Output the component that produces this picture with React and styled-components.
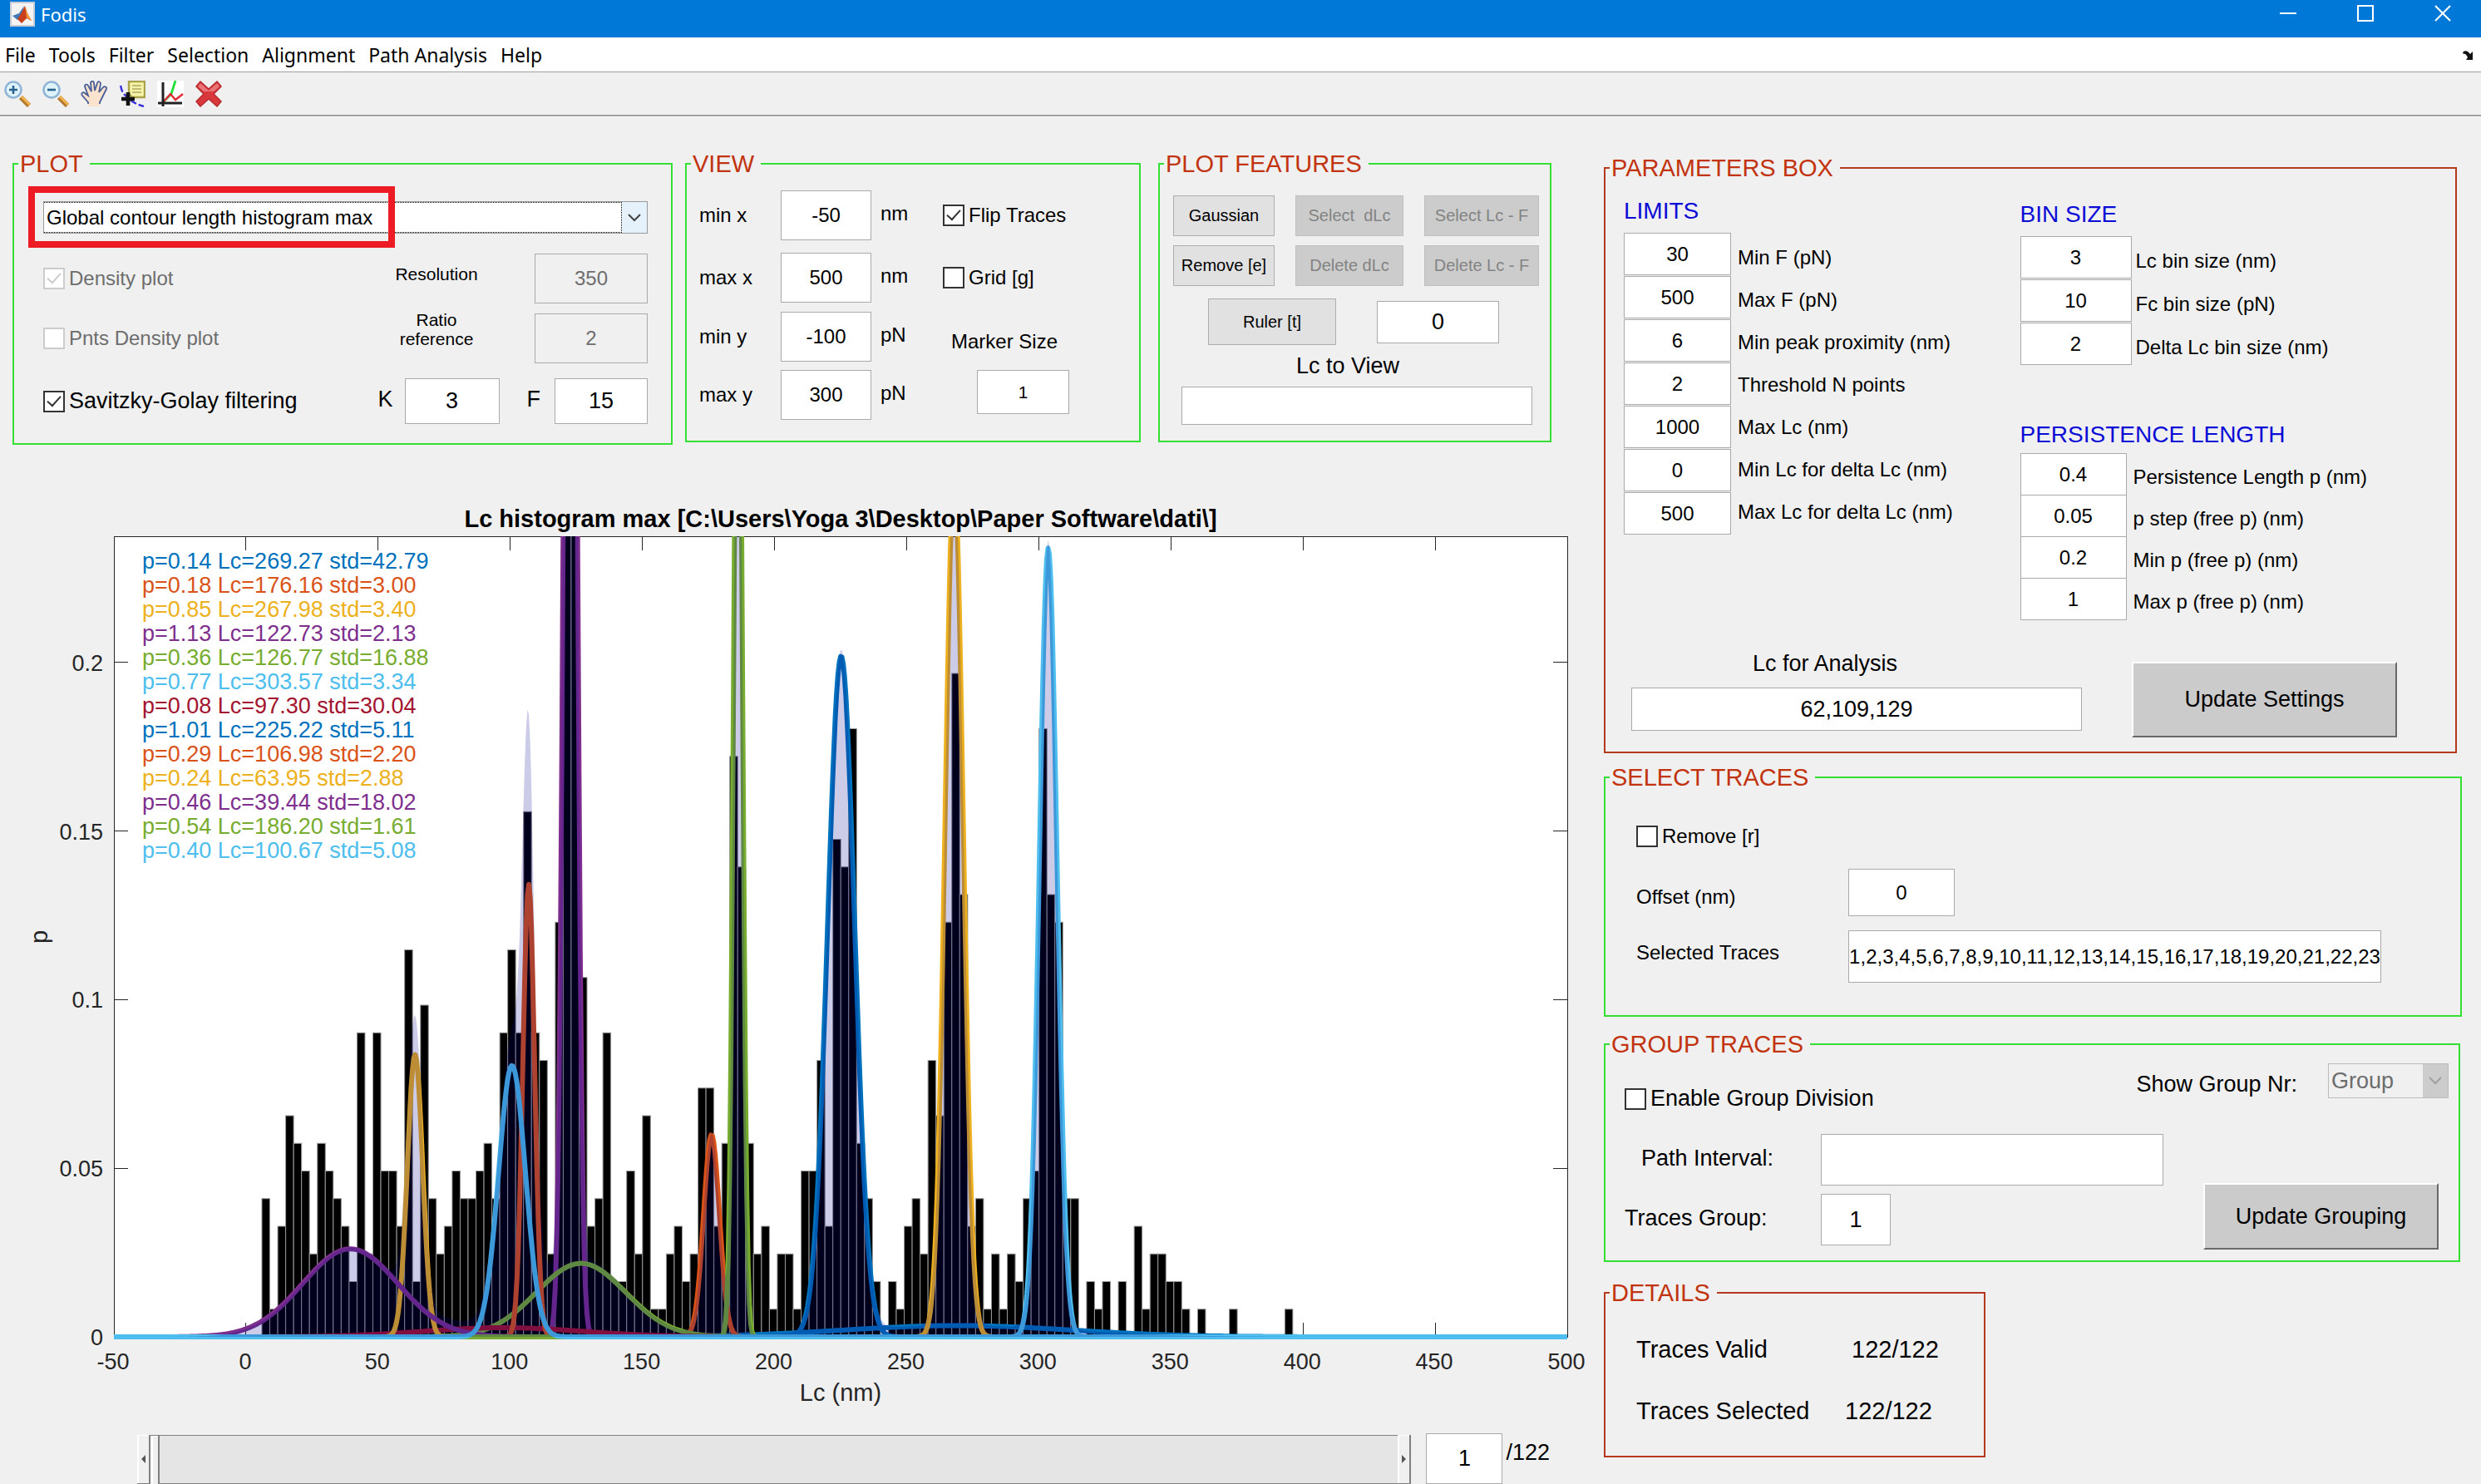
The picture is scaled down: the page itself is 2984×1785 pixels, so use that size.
import React from "react";
import styled, { createGlobalStyle, css } from "styled-components";

const GREEN = "#33df33";
const RUST = "#b5391d";
const SANS = '"Liberation Sans", Arial, sans-serif';
const SYSTEM = '"Noto Sans", "Open Sans", sans-serif';

const GlobalStyle = createGlobalStyle`
  *, *::before, *::after { box-sizing: border-box; }
  body { margin: 0; background: #f0f0f0; color: #000; font-family: ${SANS}; }
  button, input, select { font-family: inherit; margin: 0; border-radius: 0; }
`;

/* ---------- window chrome ---------- */

const TitleBar = styled.header`
  display: flex;
  align-items: flex-start;
  height: 45px;
  padding-left: 12px;
  background: #0078d7;
  color: #fff;
`;

const AppIcon = styled.svg`
  width: 30px;
  height: 30px;
  margin: 2px 7px 0 0;
`;

const AppName = styled.h1`
  flex: 1;
  margin: 0;
  font: 400 22px/34px ${SYSTEM};
`;

const WindowButton = styled.button`
  width: 93px;
  height: 32px;
  padding: 0;
  border: 0;
  background: transparent;
  color: #fff;
  svg { display: block; margin: 0 auto; }
`;

const MenuBar = styled.nav`
  display: flex;
  align-items: center;
  height: 42px;
  padding: 0 8px 0 6px;
  gap: 16px;
  background: #fff;
  border-bottom: 1px solid #a0a0a0;
`;

const MenuItem = styled.button`
  padding: 0;
  border: 0;
  background: transparent;
  font: 400 23px/40px ${SYSTEM};
  color: #000;
`;

const DockArrow = styled.svg`
  width: 14px;
  height: 12px;
  margin-left: auto;
`;

const ToolBar = styled.div`
  display: flex;
  align-items: center;
  gap: 14px;
  height: 53px;
  padding: 0 5px;
  border-bottom: 2px solid #a0a0a0;
  box-shadow: 0 1px 0 #fff;
`;

const ToolButton = styled.button`
  width: 32px;
  height: 32px;
  padding: 0;
  border: 0;
  background: transparent;
  svg { display: block; width: 32px; height: 32px; }
`;

/* ---------- layout ---------- */

const Workspace = styled.main`
  display: grid;
  grid-template-columns: 1910fr 1074fr;
  padding-top: 41px;
`;

const LeftSide = styled.div`
  min-width: 0;
`;

const TopPanels = styled.div`
  display: grid;
  grid-template-columns: 794fr 554fr 473fr;
  column-gap: 15px;
  align-items: start;
  padding: 0 44px 0 15px;
`;

const RightSide = styled.div`
  padding: 5px 23px 0 19px;
`;

/* ---------- panels ---------- */

const Panel = styled.fieldset`
  min-width: 0;
  margin: 0 ${(p) => p.$inset || 0}px ${(p) => p.$after || 0}px 0;
  padding: 0;
  border: 2px solid ${(p) => (p.$rust ? RUST : GREEN)};
  ${(p) => p.$narrow && css`width: 44.5%;`}
`;

const PanelTitle = styled.legend`
  margin-left: 5px;
  padding: 0 8px 0 2px;
  font-size: 29px;
  line-height: 32px;
  color: #c2330f;
`;

const PlotBody = styled.div`
  padding: 29px 28px 23px 35px;
`;

const ViewBody = styled.div`
  display: grid;
  grid-template-columns: 98px 120px 75px 1fr;
  grid-template-rows: 75px 71px 70px 60px;
  align-items: start;
  padding: 16px 0 25px 15px;
`;

const FeaturesBody = styled.div`
  padding: 22px 13px 19px 16px;
`;

const ParamsBody = styled.div`
  padding: 20px 0 17px 22px;
`;

/* ---------- controls ---------- */

const Field = styled.input`
  width: ${(p) => (p.$w ? `${p.$w}px` : "100%")};
  height: ${(p) => p.$h}px;
  padding: 0;
  border: 1px solid #aaa;
  background: #fff;
  color: #000;
  font-size: ${(p) => p.$size || 24}px;
  text-align: center;
  &:disabled { background: #f0f0f0; color: #6d6d6d; }
`;

const Caption = styled.label`
  display: block;
  font-size: ${(p) => p.$size || 24}px;
  line-height: ${(p) => p.$line || 60}px;
  padding-left: ${(p) => p.$indent || 0}px;
  padding-right: ${(p) => p.$trail || 0}px;
  text-align: ${(p) => (p.$center ? "center" : "left")};
  white-space: nowrap;
`;

const CheckLabel = styled.label`
  display: flex;
  flex: ${(p) => (p.$grow ? 1 : "none")};
  align-items: center;
  gap: 5px;
  height: ${(p) => p.$h || 60}px;
  font-size: ${(p) => p.$size || 24}px;
  white-space: nowrap;
  color: ${(p) => (p.$off ? "#6d6d6d" : "#000")};
`;

const CheckBox = styled.input`
  appearance: none;
  flex: none;
  width: 26px;
  height: 26px;
  border: 2px solid #333;
  background: #fff;
  &:checked::before {
    content: "";
    display: block;
    width: 16px;
    height: 9px;
    margin: 4px 0 0 3px;
    border: solid #333;
    border-width: 0 0 2px 2px;
    transform: rotate(-48deg);
  }
  &:disabled { border-color: #ccc; }
  &:disabled::before { border-color: #ccc; }
`;

function Check({ label, size, h, grow, ...rest }) {
  return (
    <CheckLabel $size={size} $h={h} $grow={grow} $off={rest.disabled}>
      <CheckBox type="checkbox" {...rest} />
      {label}
    </CheckLabel>
  );
}

const SelectBox = styled.div`
  position: relative;
  width: ${(p) => (p.$w ? `${p.$w}px` : "100%")};
  height: ${(p) => p.$h}px;
`;

const Select = styled.select`
  appearance: none;
  width: 100%;
  height: 100%;
  padding: 0 32px 0 3px;
  border: 1px solid #999;
  background: #fff;
  font-size: ${(p) => p.$size}px;
  color: #000;
  opacity: 1;
  &:disabled { background: #f0f0f0; color: #6d6d6d; border-color: #bbb; }
`;

const SelectArrow = styled.span`
  position: absolute;
  inset: 1px 1px 1px auto;
  display: grid;
  place-items: center;
  width: 30px;
  background: ${(p) => (p.$off ? "#ccc" : "#e5f1fb")};
  color: ${(p) => (p.$off ? "#a0a0a0" : "#444")};
  pointer-events: none;
`;

const FocusRing = styled.span`
  position: absolute;
  inset: 1px 31px 1px 1px;
  border: 1px dotted #000;
  border-left: 0;
  pointer-events: none;
`;

const Highlight = styled.span`
  position: absolute;
  top: -18px;
  left: -18px;
  width: 441px;
  height: 74px;
  border: 8px solid #ed1c24;
  pointer-events: none;
`;

const SmallButton = styled.button`
  width: ${(p) => (p.$w ? `${p.$w}px` : "100%")};
  height: ${(p) => p.$h || 49}px;
  padding: 0;
  border: 1px solid #adadad;
  background: #e1e1e1;
  color: #000;
  font-size: 20px;
  white-space: pre;
  &:disabled { border-color: #bfbfbf; background: #ccc; color: #838383; }
`;

const BigButton = styled.button`
  flex: none;
  width: ${(p) => p.$w}px;
  height: ${(p) => p.$h}px;
  margin-top: ${(p) => p.$top}px;
  padding: 0;
  border: 2px solid;
  border-color: #fff #696969 #696969 #fff;
  background: #cbcbcb;
  color: #000;
  font-size: 27px;
`;

/* ---------- plot panel ---------- */

const DensityRows = styled.div`
  display: flex;
  margin-top: 24px;
`;

const Stack = styled.div`
  display: flex;
  flex-direction: column;
  flex: ${(p) => (p.$grow ? 1 : "none")};
  gap: ${(p) => p.$gap || 0}px;
  width: ${(p) => (p.$w ? `${p.$w}px` : "auto")};
`;

const FilterRow = styled.div`
  display: flex;
  margin-top: 18px;
`;

const DensityLabels = styled(Stack)`
  margin-right: 63px;
`;

/* ---------- features panel ---------- */

const ButtonGrid = styled.div`
  display: grid;
  grid-template-columns: 122px 130px 138px;
  gap: 11px 0;
  justify-content: space-between;
`;

const RulerRow = styled.div`
  display: flex;
  align-items: center;
  gap: 49px;
  margin-top: 15px;
  padding-left: 42px;
`;

const ViewField = styled.div`
  padding: 0 8px 0 10px;
`;

const MarkerField = styled.div`
  padding: 0 0 0 41px;
`;

/* ---------- parameters panel ---------- */

const ParamColumns = styled.div`
  display: grid;
  grid-template-columns: 477fr 524fr;
`;

const ParamTitle = styled.h2`
  margin: 0 0 ${(p) => p.$after}px;
  font-weight: 400;
  font-size: 28px;
  line-height: 32px;
  color: #0b0bd6;
`;

const ParamGrid = styled.div`
  display: flex;
  gap: ${(p) => p.$gap}px;
`;

const ParamInputs = styled.div`
  display: grid;
  grid-auto-rows: ${(p) => p.$step}px;
  width: ${(p) => p.$w}px;
`;

const ParamLabels = styled.div`
  padding-top: 4px;
`;

const RightParams = styled.div`
  display: flex;
  flex-direction: column;
  justify-content: space-between;
  height: 511px;
  padding-top: 4px;
`;

const AnalysisRow = styled.div`
  display: flex;
  gap: 60px;
  margin-top: 30px;
  padding-left: 9px;
`;

function ParamGroup({ title, items, w, step, labelStep, after, gap = 8 }) {
  return (
    <section>
      <ParamTitle $after={after}>{title}</ParamTitle>
      <ParamGrid $gap={gap}>
        <ParamInputs $w={w} $step={step}>
          {items.map(([id, , value]) => (
            <Field key={id} id={id} $h={51} defaultValue={value} />
          ))}
        </ParamInputs>
        <ParamLabels>
          {items.map(([id, label]) => (
            <Caption key={id} htmlFor={id} $line={labelStep}>
              {label}
            </Caption>
          ))}
        </ParamLabels>
      </ParamGrid>
    </section>
  );
}

const LIMITS = [
  ["min-f", "Min F (pN)", "30"],
  ["max-f", "Max F (pN)", "500"],
  ["min-peak", "Min peak proximity (nm)", "6"],
  ["threshold", "Threshold N points", "2"],
  ["max-lc", "Max Lc (nm)", "1000"],
  ["min-dlc", "Min Lc for delta Lc (nm)", "0"],
  ["max-dlc", "Max Lc for delta Lc (nm)", "500"],
];
const BINS = [
  ["lc-bin", "Lc bin size (nm)", "3"],
  ["fc-bin", "Fc bin size (pN)", "10"],
  ["dlc-bin", "Delta Lc bin size (nm)", "2"],
];
const PERSISTENCE = [
  ["p-length", "Persistence Length p (nm)", "0.4"],
  ["p-step", "p step (free p) (nm)", "0.05"],
  ["p-min", "Min p (free p) (nm)", "0.2"],
  ["p-max", "Max p (free p) (nm)", "1"],
];

/* ---------- traces panels ---------- */

const SelectBody = styled.div`
  padding: 25px 0 39px 37px;
`;

const TraceGrid = styled.div`
  display: grid;
  grid-template-columns: 255px 1fr;
  grid-template-rows: 74px 63px;
  align-items: start;
  margin-top: 9px;
`;

const GroupBody = styled.div`
  padding: 7px 12px 14px 23px;
`;

const GroupTop = styled.div`
  display: flex;
  align-items: flex-start;
`;

const GroupGrid = styled.div`
  display: grid;
  grid-template-columns: 236px 412px;
  grid-auto-rows: 72px;
  align-items: start;
`;

const GroupBottom = styled.div`
  display: flex;
  justify-content: space-between;
  height: 138px;
  padding-right: 12px;
`;

const DetailList = styled.dl`
  margin: 0;
  padding: 15px 0 17px 37px;
  font-size: 29px;
  line-height: 74px;
`;

const DetailRow = styled.div`
  display: flex;
  height: 74px;
  dt { width: ${(p) => p.$w}px; }
  dd { margin: 0; }
`;

/* ---------- chart ---------- */

const Chart = styled.svg`
  display: block;
  width: 100%;
  margin-top: 55px;
  font-family: ${SANS};
  font-size: 27px;
  fill: #262626;
`;

const X0 = 137;
const Y0 = 1608;
const TOP = 645;
const RIGHT = 1885;
const px = (lc) => X0 + ((lc + 50) * (RIGHT - X0)) / 550;
const py = (p) => Y0 - p * 4056;

/* trace counts per 3 nm bin, the first bin starts at 6 nm */
const COUNTS = [
  5, 1, 4, 8, 7, 6, 3, 7, 6, 5, 4, 2, 11, 3, 11, 6, 6, 4, 14, 2, 12, 5, 3, 4, 6,
  5, 5, 6, 7, 5, 11, 14, 11, 19, 11, 10, 3, 15, 60, 60, 13, 4, 5, 11, 2, 2, 6,
  3, 8, 1, 1, 3, 4, 2, 3, 9, 9, 4, 7, 21, 17, 7, 3, 4, 1, 3, 3, 1, 6, 6, 10, 4,
  18, 17, 22, 7, 5, 2, 0, 2, 1, 4, 5, 3, 10, 8, 15, 24, 16, 4, 5, 1, 3, 1, 3, 2,
  5, 6, 22, 16, 15, 5, 5, 0, 2, 1, 2, 0, 2, 0, 4, 1, 3, 3, 2, 2, 1, 0, 1, 0, 0,
  0, 1, 0, 0, 0, 0, 0, 0, 1,
];

/* p, Lc and std as they are printed, the line colour, and p before rounding */
const FITS = [
  ["0.14", "269.27", "42.79", "#0072bd", 0.14],
  ["0.18", "176.16", "3.00", "#d95319", 0.176],
  ["0.85", "267.98", "3.40", "#edb120", 0.85],
  ["1.13", "122.73", "2.13", "#7e2f8e", 1.13],
  ["0.36", "126.77", "16.88", "#77ac30", 0.36],
  ["0.77", "303.57", "3.34", "#4dbeee", 0.765],
  ["0.08", "97.30", "30.04", "#a2142f", 0.08],
  ["1.01", "225.22", "5.11", "#0072bd", 1.01],
  ["0.29", "106.98", "2.20", "#d95319", 0.289],
  ["0.24", "63.95", "2.88", "#edb120", 0.236],
  ["0.46", "39.44", "18.02", "#7e2f8e", 0.46],
  ["0.54", "186.20", "1.61", "#77ac30", 0.54],
  ["0.40", "100.67", "5.08", "#4dbeee", 0.4],
];

const gauss = ([, m, s, , p], x) =>
  ((1.0215 * p) / s) * Math.exp(-((x - m) ** 2) / (2 * s * s));

const XS = Array.from({ length: 1101 }, (_, i) => -50 + i / 2);
const line = (f) =>
  XS.map((x) => `${px(x).toFixed(1)},${py(f(x)).toFixed(1)}`).join(" ");

const CURVES = FITS.map((fit) => line((x) => gauss(fit, x)));
const SUM = line((x) => FITS.reduce((t, fit) => t + gauss(fit, x), 0));

const XTICKS = [-50, 0, 50, 100, 150, 200, 250, 300, 350, 400, 450, 500];
const YTICKS = [0, 0.05, 0.1, 0.15, 0.2];

function Histogram() {
  return (
    <Chart viewBox="0 590 1910 1120" role="img" aria-label="Lc histogram max">
      <defs>
        <clipPath id="plot-area">
          <rect x={X0} y={TOP} width={RIGHT - X0} height={Y0 - TOP + 4} />
        </clipPath>
      </defs>
      <g stroke="#262626" strokeWidth="1" shapeRendering="crispEdges">
        <rect x={X0} y={TOP} width={RIGHT - X0} height={Y0 - TOP} fill="#fff" />
        {XTICKS.slice(1, -1).map((t) => (
          <path key={t} d={`M${px(t)} ${TOP}v17M${px(t)} ${Y0}v-17`} />
        ))}
        {YTICKS.slice(1).map((t) => (
          <path key={t} d={`M${X0} ${py(t)}h17M${RIGHT} ${py(t)}h-17`} />
        ))}
      </g>
      <g clipPath="url(#plot-area)">
        <g fill="#000" stroke="#999" strokeWidth="1">
          {COUNTS.map((n, i) =>
            n ? (
              <rect
                key={i}
                x={px(6 + i * 3.001)}
                y={Y0 - n * 33.25}
                width={9.54}
                height={n * 33.25}
              />
            ) : null
          )}
        </g>
        <g fill="none" strokeWidth="6" strokeLinejoin="round">
          {CURVES.map((points, i) => (
            <polyline key={i} points={points} stroke={FITS[i][3]} />
          ))}
        </g>
        <polygon points={`${X0},${Y0} ${SUM} ${RIGHT},${Y0}`} fill="#00008c" fillOpacity="0.2" />
      </g>
      {FITS.map(([p, m, s, color], i) => (
        <text key={i} x="171" y={684 + i * 29} fill={color}>
          {`p=${p} Lc=${m} std=${s}`}
        </text>
      ))}
      <g textAnchor="middle">
        {XTICKS.map((t) => (
          <text key={t} x={px(t) - 1} y="1647">{t}</text>
        ))}
        <text x="1011" y="1685" fontSize="29">Lc (nm)</text>
        <text x="1011" y="634" fontSize="29" fontWeight="700" fill="#000">
          {"Lc histogram max [C:\\Users\\Yoga 3\\Desktop\\Paper Software\\dati\\]"}
        </text>
        <text fontSize="29" transform="translate(57 1127) rotate(-90)">p</text>
      </g>
      <g textAnchor="end">
        {YTICKS.map((t) => (
          <text key={t} x="124" y={py(t) + 10}>{t}</text>
        ))}
      </g>
    </Chart>
  );
}

/* ---------- trace slider ---------- */

const SliderRow = styled.div`
  display: flex;
  align-items: flex-start;
  margin-top: 14px;
  padding: 0 46px 0 165px;
`;

const SliderBar = styled.div`
  display: flex;
  flex: 1;
  height: 59px;
  margin: 2px 18px 0 0;
`;

const StepButton = styled.button`
  display: grid;
  place-items: center;
  width: 16px;
  padding: 0;
  border: 1px solid #808080;
  border-width: 0 2px 1px 0;
  background: #f0f0f0;
  box-shadow: inset 2px 1px 0 #fff;
`;

const Range = styled.input`
  appearance: none;
  flex: 1;
  min-width: 0;
  height: 59px;
  background: #e5e5e5;
  border: solid #808080;
  border-width: 1px 0;
  &::-webkit-slider-thumb {
    appearance: none;
    width: 11px;
    height: 58px;
    background: #f0f0f0;
    border-right: 2px solid #808080;
    box-shadow: inset 3px 1px 0 #fff;
  }
`;

const Total = styled.span`
  margin-left: 4px;
  font-size: 27px;
  line-height: 46px;
`;

/* ---------- icons ---------- */

function Lens({ minus }) {
  return (
    <svg viewBox="0 0 32 32">
      <path d="M20 20l10 10" stroke="#b5792c" strokeWidth="6" />
      <path d="M21 19l10 10" stroke="#f0b455" strokeWidth="3" />
      <circle cx="11" cy="11" r="9.500" fill="#dff3fb" stroke="#8fb4d6" strokeWidth="2.500" />
      <path d={minus ? "M6 11h10" : "M6 11h10M11 6v10"} stroke="#2b6390" strokeWidth="2.600" />
    </svg>
  );
}

const TOOLS = [
  ["Zoom in", <Lens />],
  ["Zoom out", <Lens minus />],
  [
    "Pan",
    <svg viewBox="0 0 32 32">
      <path
        d="M9 31v-5L2 18c-2-3 1-5 3-3l4 3L5 7c0-3 3-3 4-1l4 7L12 3c0-3 4-3 4 0l1 9 3-9c1-3 4-2 4 1l-2 10 5-6c2-2 5 0 4 2l-5 10-3 6v5z"
        fill="#fbe3cd"
      />
      <path
        d="M9 28v-2L2 18c-2-3 1-5 3-3l4 3L5 7c0-3 3-3 4-1l4 7L12 3c0-3 4-3 4 0l1 9 3-9c1-3 4-2 4 1l-2 10 5-6c2-2 5 0 4 2l-5 10-3 6v2"
        fill="none" stroke="#4a5f96" strokeWidth="1.800"
      />
    </svg>,
  ],
  [
    "Data cursor",
    <svg viewBox="0 0 32 32">
      <path d="M2 6c1 5 2 8 6 12s10 10 22 13" fill="none" stroke="#3a2fe0" strokeWidth="2.400" strokeDasharray="8 3" />
      <path d="M12 1h19v19H16l-4-4z" fill="#f7f3a6" stroke="#a9a24a" strokeWidth="2.400" />
      <path d="M16 6h11M16 10h11M16 14h11" stroke="#aca763" strokeWidth="1.600" />
      <path d="M11 14v16M3 22h16" stroke="#111" strokeWidth="4.600" />
    </svg>,
  ],
  [
    "Brush",
    <svg viewBox="0 0 32 32">
      <rect width="32" height="32" fill="#fff" />
      <path d="M6 27L17 16l5-16" fill="none" stroke="#22e03a" strokeWidth="2.800" />
      <path d="M8 25l8-9 6 7 9-7" fill="none" stroke="#e02a3a" strokeWidth="2.400" />
      <path d="M7 2v29M1 27h29" stroke="#222" strokeWidth="3" />
    </svg>,
  ],
  [
    "Delete",
    <svg viewBox="0 0 32 32">
      <path d="M6 1l10 9L26 1l5 6-9 9 9 9-5 6-10-9-10 9-5-6 9-9-9-9z" fill="#d8383c" stroke="#b92a2f" strokeWidth="1.500" strokeLinejoin="round" />
      <path d="M6 3l10 9L26 3l3 4-7 6H10L3 7z" fill="#e87577" />
    </svg>,
  ],
];

const Chevron = () => (
  <svg width="16" height="10" viewBox="0 0 16 10" fill="none" stroke="currentColor" strokeWidth="2">
    <path d="M1 1l7 7 7-7" />
  </svg>
);

const AXES = [
  ["min-x", "min x", "-50", "nm"],
  ["max-x", "max x", "500", "nm"],
  ["min-y", "min y", "-100", "pN"],
  ["max-y", "max y", "300", "pN"],
];

const VIEW_EXTRAS = [
  <Check label="Flip Traces" defaultChecked />,
  <Check label="Grid [g]" />,
  <Caption htmlFor="marker" $line={72} $indent={10}>Marker Size</Caption>,
  <MarkerField>
    <Field id="marker" $w={111} $h={53} $size={21} defaultValue="1" />
  </MarkerField>,
];

export default function App() {
  return (
    <>
      <GlobalStyle />
      <TitleBar>
        <AppIcon viewBox="0 0 30 30">
          <rect x="1" y="1" width="28" height="28" fill="#f4f4f4" stroke="#c9ced6" strokeWidth="2" />
          <path d="M3 17l8-3 6-9-4 15-4 2z" fill="#3f79b8" />
          <path d="M9 21l5-8 4-8 3 9 5 9-6-3-6 6z" fill="#c8401c" />
          <path d="M18 5l3 9 5 9-6-4z" fill="#f29a3c" />
        </AppIcon>
        <AppName>Fodis</AppName>
        <WindowButton aria-label="Minimize">
          <svg width="20" height="20"><path d="M0 10h20" stroke="#fff" strokeWidth="2" /></svg>
        </WindowButton>
        <WindowButton aria-label="Maximize">
          <svg width="20" height="20"><rect x="1" y="1" width="18" height="18" fill="none" stroke="#fff" strokeWidth="2" /></svg>
        </WindowButton>
        <WindowButton aria-label="Close">
          <svg width="20" height="20"><path d="M1 1l18 18M19 1L1 19" stroke="#fff" strokeWidth="2" /></svg>
        </WindowButton>
      </TitleBar>
      <MenuBar>
        {["File", "Tools", "Filter", "Selection", "Alignment", "Path Analysis", "Help"].map((m) => (
          <MenuItem key={m}>{m}</MenuItem>
        ))}
        <DockArrow viewBox="0 0 14 12">
          <path d="M0 3c3-3 6-2 9 2l3-3v10H4l2-3C4 5 3 4 1 5z" fill="#111" />
        </DockArrow>
      </MenuBar>
      <ToolBar>
        {TOOLS.map(([name, icon]) => (
          <ToolButton key={name} aria-label={name}>{icon}</ToolButton>
        ))}
      </ToolBar>

      <Workspace>
        <LeftSide>
          <TopPanels>
            <Panel>
              <PanelTitle>PLOT</PanelTitle>
              <PlotBody>
                <SelectBox $h={39}>
                  <Select $size={24} aria-label="Plot type">
                    <option>Global contour length histogram max</option>
                  </Select>
                  <FocusRing />
                  <SelectArrow><Chevron /></SelectArrow>
                  <Highlight />
                </SelectBox>
                <DensityRows>
                  <Stack $grow $gap={12}>
                    <Check label="Density plot" defaultChecked disabled />
                    <Check label="Pnts Density plot" disabled />
                  </Stack>
                  <DensityLabels $w={110} $gap={18}>
                    <Caption htmlFor="resolution" $size={21} $line={50} $center>Resolution</Caption>
                    <Caption htmlFor="ratio" $size={21} $line={23} $center>
                      Ratio
                      <br />
                      reference
                    </Caption>
                  </DensityLabels>
                  <Stack $gap={12}>
                    <Field id="resolution" $w={136} $h={60} defaultValue="350" disabled />
                    <Field id="ratio" $w={136} $h={60} defaultValue="2" disabled />
                  </Stack>
                </DensityRows>
                <FilterRow>
                  <Check label="Savitzky-Golay filtering" size={27} h={55} grow defaultChecked />
                  <Caption htmlFor="k" $size={27} $line={50} $trail={14}>K</Caption>
                  <Field id="k" $w={114} $h={55} $size={27} defaultValue="3" />
                  <Caption htmlFor="f" $size={27} $line={50} $indent={33} $trail={17}>F</Caption>
                  <Field id="f" $w={112} $h={55} $size={27} defaultValue="15" />
                </FilterRow>
              </PlotBody>
            </Panel>

            <Panel $inset={6}>
              <PanelTitle>VIEW</PanelTitle>
              <ViewBody>
                {AXES.map(([id, label, value, unit], i) => (
                  <React.Fragment key={id}>
                    <Caption htmlFor={id}>{label}</Caption>
                    <Field id={id} $w={109} $h={60} defaultValue={value} />
                    <Caption as="span" $line={56}>{unit}</Caption>
                    {VIEW_EXTRAS[i]}
                  </React.Fragment>
                ))}
              </ViewBody>
            </Panel>

            <Panel>
              <PanelTitle>PLOT FEATURES</PanelTitle>
              <FeaturesBody>
                <ButtonGrid>
                  <SmallButton>Gaussian</SmallButton>
                  <SmallButton disabled>{"Select  dLc"}</SmallButton>
                  <SmallButton disabled>Select Lc - F</SmallButton>
                  <SmallButton>Remove [e]</SmallButton>
                  <SmallButton disabled>Delete dLc</SmallButton>
                  <SmallButton disabled>Delete Lc - F</SmallButton>
                </ButtonGrid>
                <RulerRow>
                  <SmallButton $w={154} $h={56}>Ruler [t]</SmallButton>
                  <Field aria-label="Ruler value" $w={147} $h={51} $size={27} defaultValue="0" />
                </RulerRow>
                <Caption htmlFor="lc-view" $size={27} $line={50} $trail={20} $center>Lc to View</Caption>
                <ViewField>
                  <Field id="lc-view" $h={46} />
                </ViewField>
              </FeaturesBody>
            </Panel>
          </TopPanels>

          <Histogram />

          <SliderRow>
            <SliderBar>
              <StepButton aria-label="Previous trace">
                <svg width="5" height="10"><path d="M5 0v10L0 5z" fill="#555" /></svg>
              </StepButton>
              <Range type="range" min="1" max="122" defaultValue="1" aria-label="Trace" />
              <StepButton aria-label="Next trace">
                <svg width="5" height="10"><path d="M0 0v10l5-5z" fill="#555" /></svg>
              </StepButton>
            </SliderBar>
            <Field aria-label="Trace number" $w={92} $h={61} $size={27} defaultValue="1" />
            <Total>/122</Total>
          </SliderRow>
        </LeftSide>

        <RightSide>
          <Panel $rust $inset={6} $after={13}>
            <PanelTitle>PARAMETERS BOX</PanelTitle>
            <ParamsBody>
              <ParamColumns>
                <ParamGroup title="LIMITS" items={LIMITS} w={129} step={52} labelStep={51} after={10} />
                <RightParams>
                  <ParamGroup title="BIN SIZE" items={BINS} w={134} step={52} labelStep={52} after={10} gap={5} />
                  <ParamGroup title="PERSISTENCE LENGTH" items={PERSISTENCE} w={128} step={50} labelStep={50} after={6} />
                </RightParams>
              </ParamColumns>
              <AnalysisRow>
                <Stack $w={542} $gap={10}>
                  <Caption htmlFor="lc-analysis" $size={27} $line={38} $trail={76} $center>Lc for Analysis</Caption>
                  <Field id="lc-analysis" $h={52} $size={27} defaultValue="62,109,129" />
                </Stack>
                <BigButton $w={319} $h={91} $top={17}>Update Settings</BigButton>
              </AnalysisRow>
            </ParamsBody>
          </Panel>

          <Panel $after={17}>
            <PanelTitle>SELECT TRACES</PanelTitle>
            <SelectBody>
              <Check label="Remove [r]" />
              <TraceGrid>
                <Caption htmlFor="offset" $line={67}>Offset (nm)</Caption>
                <Field id="offset" $w={128} $h={57} defaultValue="0" />
                <Caption htmlFor="selected" $line={53}>Selected Traces</Caption>
                <Field
                  id="selected"
                  $w={641}
                  $h={63}
                  defaultValue="1,2,3,4,5,6,7,8,9,10,11,12,13,14,15,16,17,18,19,20,21,22,23"
                />
              </TraceGrid>
            </SelectBody>
          </Panel>

          <Panel $inset={2} $after={21}>
            <PanelTitle>GROUP TRACES</PanelTitle>
            <GroupBody>
              <GroupTop>
                <Check label="Enable Group Division" size={27} h={85} grow />
                <Caption htmlFor="group-nr" $size={27} $line={50} $trail={37}>Show Group Nr:</Caption>
                <SelectBox $w={145} $h={42}>
                  <Select id="group-nr" $size={27} disabled>
                    <option>Group</option>
                  </Select>
                  <SelectArrow $off><Chevron /></SelectArrow>
                </SelectBox>
              </GroupTop>
              <GroupBottom>
                <GroupGrid>
                  <Caption htmlFor="path" $size={27} $line={58} $indent={20}>Path Interval:</Caption>
                  <Field id="path" $h={62} $size={27} />
                  <Caption htmlFor="traces-group" $size={27} $line={58}>Traces Group:</Caption>
                  <Field id="traces-group" $w={84} $h={62} $size={27} defaultValue="1" />
                </GroupGrid>
                <BigButton $w={283} $h={80} $top={59}>Update Grouping</BigButton>
              </GroupBottom>
            </GroupBody>
          </Panel>

          <Panel $rust $narrow>
            <PanelTitle>DETAILS</PanelTitle>
            <DetailList>
              <DetailRow $w={259}><dt>Traces Valid</dt><dd>122/122</dd></DetailRow>
              <DetailRow $w={251}><dt>Traces Selected</dt><dd>122/122</dd></DetailRow>
            </DetailList>
          </Panel>
        </RightSide>
      </Workspace>
    </>
  );
}
